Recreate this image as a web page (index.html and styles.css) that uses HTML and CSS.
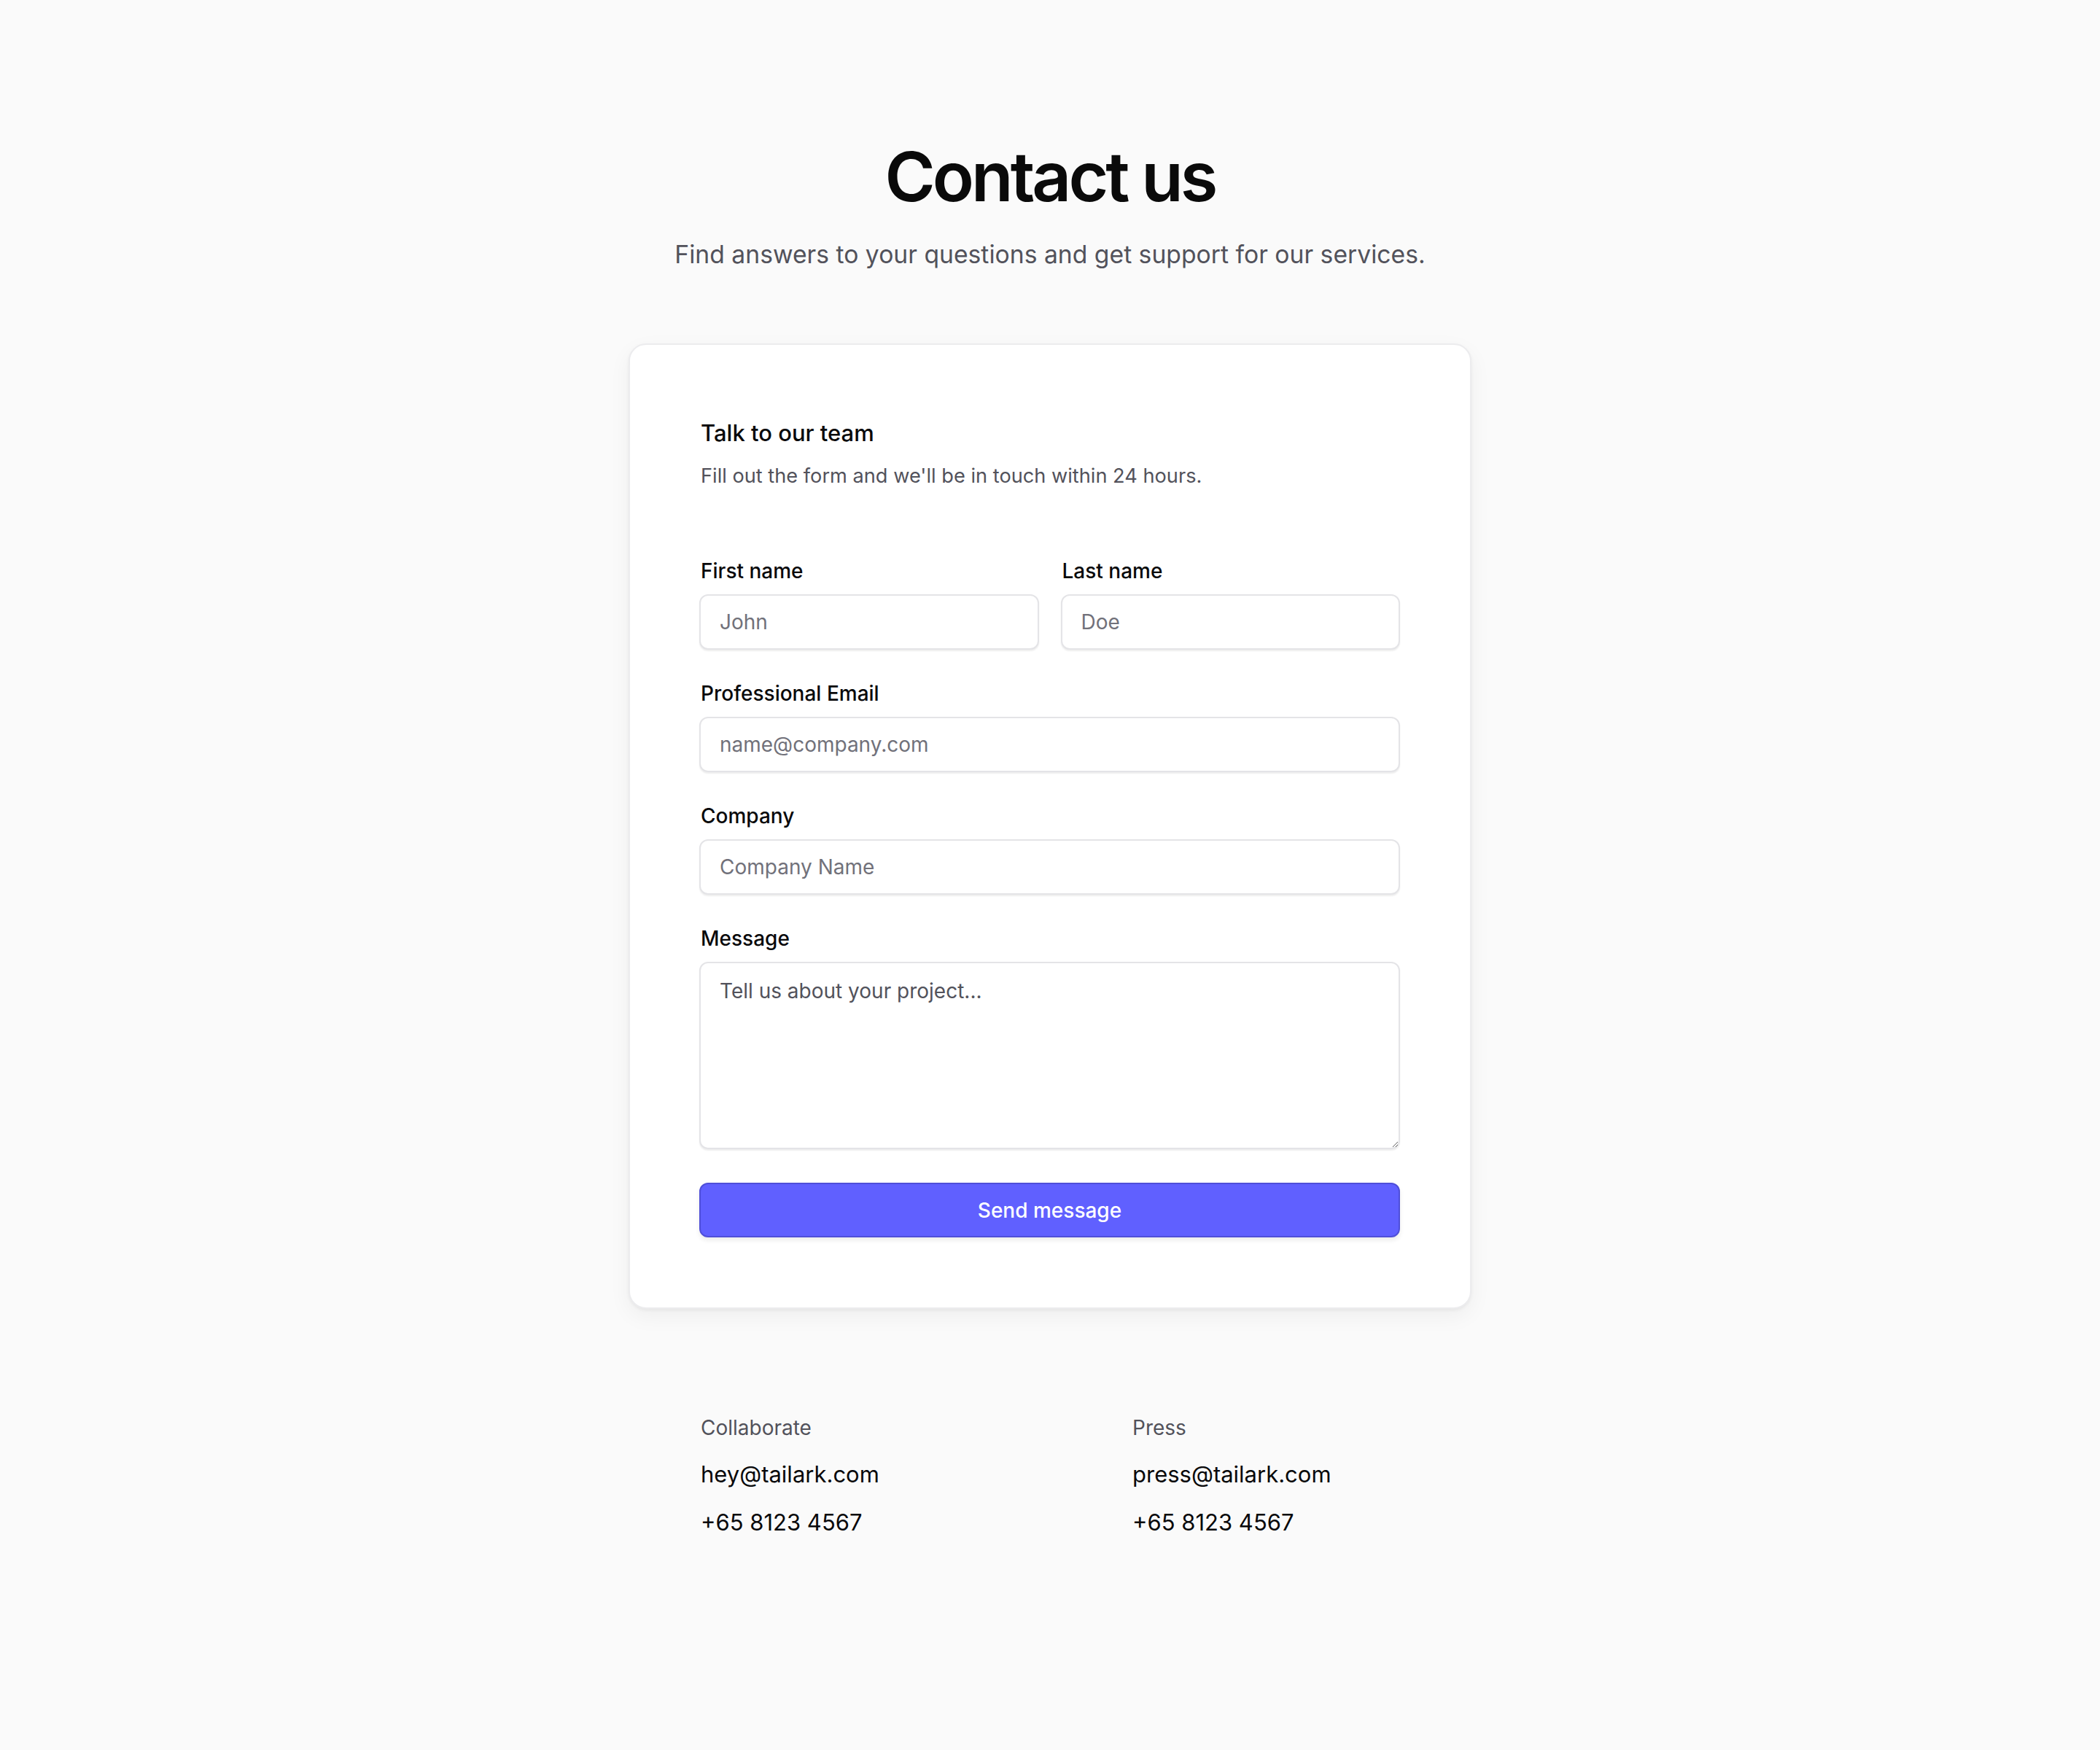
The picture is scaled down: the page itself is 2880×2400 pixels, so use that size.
FILE: index.html
```html
<!DOCTYPE html>
<html>
  <head>
    <title>Contact us</title>
    <link rel="stylesheet" href="styles.css">
  </head>
  <body>
    <main class="page">
      <h1 class="page_title">Contact us</h1>
      <p class="page_lead">Find answers to your questions and get support for our services.</p>

      <!-- Kontaktformular -->
      <div class="card">
        <h2 class="card_title">Talk to our team</h2>
        <p class="card_text">Fill out the form and we'll be in touch within 24 hours.</p>

        <form class="form" onsubmit="return false;">
          <div class="form_row">
            <div class="field">
              <label class="field_label" for="first">First name</label>
              <input class="field_input" type="text" id="first" name="first" placeholder="John">
            </div>
            <div class="field">
              <label class="field_label" for="last">Last name</label>
              <input class="field_input" type="text" id="last" name="last" placeholder="Doe">
            </div>
          </div>

          <div class="field">
            <label class="field_label" for="email">Professional Email</label>
            <input class="field_input" type="email" id="email" name="email" placeholder="name@company.com">
          </div>

          <div class="field">
            <label class="field_label" for="company">Company</label>
            <input class="field_input" type="text" id="company" name="company" placeholder="Company Name">
          </div>

          <div class="field">
            <label class="field_label" for="message">Message</label>
            <textarea class="field_input field_area" id="message" name="message" placeholder="Tell us about your project..."></textarea>
          </div>

          <button class="btn" type="submit">Send message</button>
        </form>
      </div>

      <!-- Direkte Kontakte -->
      <div class="contacts">
        <div class="contact">
          <span class="contact_label">Collaborate</span>
          <a class="contact_link" href="mailto:hey@tailark.com">hey@tailark.com</a>
          <span class="contact_link">+65 8123 4567</span>
        </div>
        <div class="contact">
          <span class="contact_label">Press</span>
          <a class="contact_link" href="mailto:press@tailark.com">press@tailark.com</a>
          <span class="contact_link">+65 8123 4567</span>
        </div>
      </div>
    </main>
  </body>
</html>
```

FILE: styles.css
```css
body {
  margin: 0;
  background: #fafafa;
  color: #09090b;
  font-family: Inter, "Noto Sans", sans-serif;
}

.page {
  display: flex;
  flex-direction: column;
  align-items: center;
  padding: 190px 0 200px;
}

.page_title {
  margin: 0;
  font-size: 94px;
  line-height: 104px;
  font-weight: 600;
  letter-spacing: -0.042em;
  color: #0a0a0a;
}

.page_lead {
  margin: 31px 0 0;
  font-size: 33.7px;
  line-height: 48px;
  color: #52525b;
}

/* Karte mit dem Formular */
.card {
  width: 1156px;
  box-sizing: border-box;
  margin-top: 98px;
  padding: 96px 96px 96px 95px;
  background: #ffffff;
  border: 2px solid #ececee;
  border-radius: 24px;
  box-shadow: 0 2px 4px rgba(0, 0, 0, 0.05), 0 10px 30px rgba(0, 0, 0, 0.05);
}

.card_title {
  margin: 0 0 0 2px;
  font-size: 31px;
  line-height: 50px;
  font-weight: 500;
}

.card_text {
  margin: 14px 0 0 2px;
  font-size: 27.2px;
  line-height: 40px;
  color: #52525b;
}

.form {
  display: flex;
  flex-direction: column;
  gap: 40px;
  margin-top: 90px;
}

.form_row {
  display: grid;
  grid-template-columns: 1fr 1fr;
  gap: 30px;
}

.field {
  display: flex;
  flex-direction: column;
  gap: 12px;
  min-width: 0;
}

.field_label {
  margin-left: 2px;
  font-size: 28px;
  line-height: 40px;
  font-weight: 500;
}

.field_input {
  width: 100%;
  height: 76px;
  box-sizing: border-box;
  padding: 0 26px;
  font-family: inherit;
  font-size: 28px;
  color: #09090b;
  background: #ffffff;
  border: 2px solid #e4e4e7;
  border-radius: 12px;
  box-shadow: 0 2px 2px rgba(0, 0, 0, 0.07);
  outline: none;
}

.field_input::placeholder {
  color: #71717a;
}

.field_area {
  height: 257px;
  padding: 18px 26px;
  line-height: 40px;
  resize: vertical;
}

.field_area::placeholder {
  color: #52525b;
}

.btn {
  height: 75px;
  margin-top: 6px;
  font-family: inherit;
  font-size: 28px;
  font-weight: 500;
  color: #ffffff;
  background: #6060ff;
  border: 2px solid #4f4fd9;
  border-radius: 12px;
  box-shadow: 0 4px 6px rgba(0, 0, 0, 0.08);
  cursor: pointer;
}

/* Kontakte unter der Karte */
.contacts {
  display: grid;
  grid-template-columns: 592px 1fr;
  width: 958px;
  margin-top: 143px;
}

.contact {
  display: flex;
  flex-direction: column;
  gap: 22px;
}

.contact_label {
  font-size: 28px;
  line-height: 40px;
  color: #52525b;
}

.contact_link {
  font-size: 31px;
  line-height: 44px;
  color: #09090b;
  text-decoration: none;
}
```
